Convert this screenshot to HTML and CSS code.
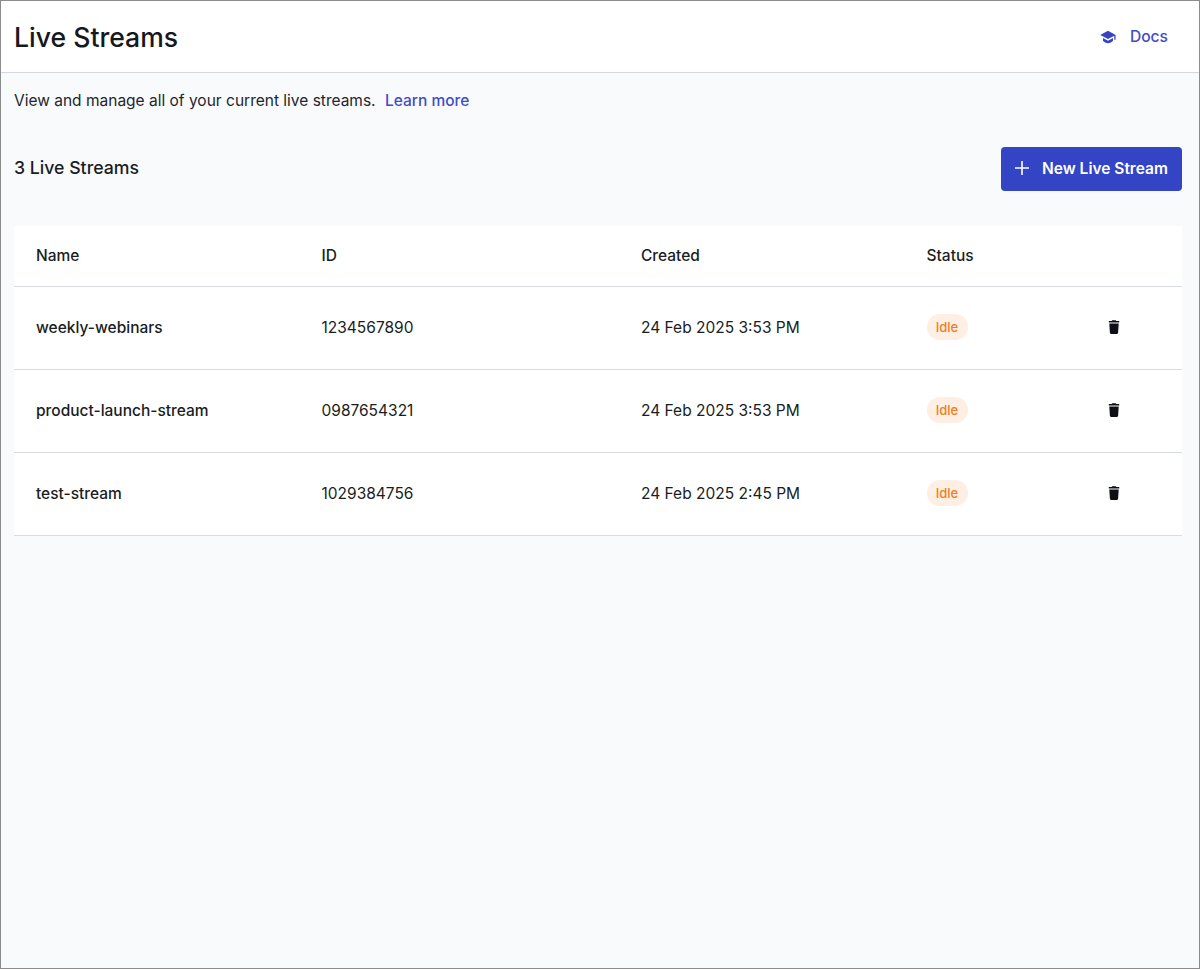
FILE: index.html
```html
<!DOCTYPE html>
<html lang="en">
<head>
<meta charset="utf-8">
<title>Live Streams</title>
<link rel="stylesheet" href="styles.css">
</head>
<body>
<div class="frame">
  <header class="topbar">
    <h1 class="title">Live Streams</h1>
    <a class="docs" href="#">
      <svg class="docs-icon" viewBox="0 0 16 14" aria-hidden="true"><path d="M8 .8.2 4.9 8 9l6.3-3.3v4.1h1.3V4.9L8 .8z"/><path d="M3 8.1v2.6C4.2 12.3 6 13.2 8 13.2s3.8-.9 5-2.5V8.1L8 10.7 3 8.1z"/></svg>
      <span>Docs</span>
    </a>
  </header>
  <main class="content">
    <p class="intro">View and manage all of your current live streams. <a class="link" href="#">Learn more</a></p>
    <div class="toolbar">
      <h2 class="count">3 Live Streams</h2>
      <button class="primary" type="button">
        <svg class="plus" viewBox="0 0 14 14" aria-hidden="true"><path d="M7 0v14M0 7h14"/></svg>
        <span>New Live Stream</span>
      </button>
    </div>
    <div class="table">
      <div class="row head">
        <div>Name</div><div>ID</div><div>Created</div><div>Status</div><div></div>
      </div>
      <div class="row">
        <div class="name">weekly-webinars</div><div>1234567890</div><div>24 Feb 2025 3:53 PM</div>
        <div><span class="badge">Idle</span></div>
        <div><svg class="trash" viewBox="0 0 12 14" aria-hidden="true"><path d="M4.2.2h3.6l.5.9h2.9v1.5H.8V1.100h2.900l.5-.9z"/><path d="M1.300 3.500h9.400l-.6 9.200c0 .7-.6 1.200-1.200 1.200H3.100c-.6 0-1.200-.5-1.200-1.200l-.6-9.200z"/></svg></div>
      </div>
      <div class="row">
        <div class="name">product-launch-stream</div><div>0987654321</div><div>24 Feb 2025 3:53 PM</div>
        <div><span class="badge">Idle</span></div>
        <div><svg class="trash" viewBox="0 0 12 14" aria-hidden="true"><path d="M4.2.2h3.6l.5.9h2.9v1.5H.8V1.100h2.900l.5-.9z"/><path d="M1.300 3.500h9.400l-.6 9.200c0 .7-.6 1.200-1.200 1.200H3.100c-.6 0-1.200-.5-1.200-1.200l-.6-9.200z"/></svg></div>
      </div>
      <div class="row">
        <div class="name">test-stream</div><div>1029384756</div><div>24 Feb 2025 2:45 PM</div>
        <div><span class="badge">Idle</span></div>
        <div><svg class="trash" viewBox="0 0 12 14" aria-hidden="true"><path d="M4.2.2h3.6l.5.9h2.9v1.5H.8V1.100h2.900l.5-.9z"/><path d="M1.300 3.500h9.400l-.6 9.200c0 .7-.6 1.200-1.200 1.200H3.100c-.6 0-1.200-.5-1.200-1.200l-.6-9.200z"/></svg></div>
      </div>
    </div>
  </main>
</div>
</body>
</html>
```

FILE: styles.css
```css
* { box-sizing: border-box; }
html, body { margin: 0; height: 100%; }
body { font-family: Inter, "Liberation Sans", sans-serif; color: #1a1d23; background: #f9fafc; }
.frame { height: 969px; border: 1px solid #8c8c8c; background: #f9fafc; display: flex; flex-direction: column; }
.topbar { height: 72px; flex: none; background: #fff; border-bottom: 1px solid #d3d7e0; display: flex; align-items: center; justify-content: space-between; padding: 0 31px 0 13px; }
.title { margin: 0; font-size: 26.6px; font-weight: 500; line-height: 32px; color: #15181d; }
.docs { display: flex; align-items: center; gap: 14px; color: #3f4dc8; font-size: 15.6px; font-weight: 500; text-decoration: none; }
.docs-icon { width: 16px; height: 14px; fill: #3644c4; }
.content { padding: 0 17px 0 13px; flex: 1; }
.intro { margin: 0; padding-top: 18px; font-size: 15.5px; line-height: 20px; color: #23262c; }
.link { margin-left: 5px; color: #3f4dc8; font-weight: 500; text-decoration: none; }
.toolbar { margin-top: 36px; height: 44px; display: flex; align-items: center; justify-content: space-between; }
.count { margin: 0 0 4px; font-size: 17.7px; font-weight: 500; }
.primary { width: 181px; height: 44px; border: 0; border-radius: 4px; background: #3344c4; color: #fff; font: 600 15.5px Inter, "Liberation Sans", sans-serif; display: flex; align-items: center; gap: 13px; padding: 0 14px 2px; }
.plus { width: 14px; height: 14px; stroke: #fff; stroke-width: 1.6; fill: none; flex: none; }
.table { margin-top: 35px; background: #fff; }
.row { display: grid; grid-template-columns: 285.5px 319.5px 285.5px 181.5px 1fr; align-items: center; padding-left: 22px; padding-bottom: 2px; height: 83px; border-bottom: 1px solid #d8dbe2; font-size: 15.5px; font-weight: 400; }
.row.head { height: 61px; font-weight: 500; }
.name { font-weight: 500; }
.badge { display: inline-block; vertical-align: top; width: 41px; height: 26px; border-radius: 13px; background: #feeee4; color: #ee7f1b; font-size: 13px; font-weight: 500; line-height: 26px; text-align: center; }
.trash { display: block; width: 12px; height: 14px; fill: #0d0f14; }
```
